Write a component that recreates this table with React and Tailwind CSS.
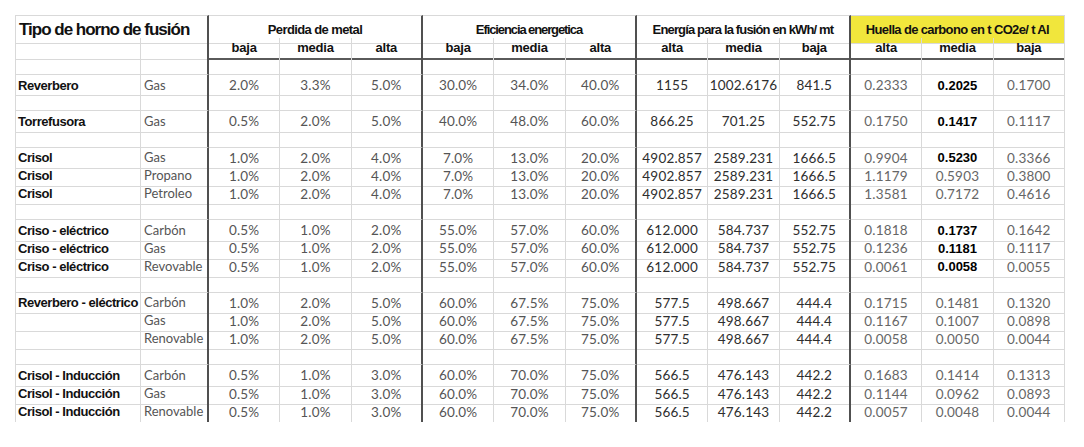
import React from "react";

const GRID = "grid grid-cols-[126px_68px_repeat(12,71.33px)]";

const groups = [
  { title: "Perdida de metal", track: "tracking-[-0.6px]", subs: ["baja", "media", "alta"], yellow: false },
  { title: "Eficiencia energetica", track: "tracking-[-1.1px]", subs: ["baja", "media", "alta"], yellow: false },
  { title: "Energía para la fusión en kWh/ mt", track: "tracking-[-0.85px]", subs: ["alta", "media", "baja"], yellow: false },
  { title: "Huella de carbono en t CO2e/ t Al", track: "tracking-[-0.65px]", subs: ["alta", "media", "baja"], yellow: true },
];

const rows = [
  null,
  ["Reverbero", "Gas", ["2.0%", "3.3%", "5.0%"], ["30.0%", "34.0%", "40.0%"], ["1155", "1002.6176", "841.5"], ["0.2333", "0.2025", "0.1700"], true],
  null,
  ["Torrefusora", "Gas", ["0.5%", "2.0%", "5.0%"], ["40.0%", "48.0%", "60.0%"], ["866.25", "701.25", "552.75"], ["0.1750", "0.1417", "0.1117"], true],
  null,
  ["Crisol", "Gas", ["1.0%", "2.0%", "4.0%"], ["7.0%", "13.0%", "20.0%"], ["4902.857", "2589.231", "1666.5"], ["0.9904", "0.5230", "0.3366"], true],
  ["Crisol", "Propano", ["1.0%", "2.0%", "4.0%"], ["7.0%", "13.0%", "20.0%"], ["4902.857", "2589.231", "1666.5"], ["1.1179", "0.5903", "0.3800"], false],
  ["Crisol", "Petroleo", ["1.0%", "2.0%", "4.0%"], ["7.0%", "13.0%", "20.0%"], ["4902.857", "2589.231", "1666.5"], ["1.3581", "0.7172", "0.4616"], false],
  null,
  ["Criso - eléctrico", "Carbón", ["0.5%", "1.0%", "2.0%"], ["55.0%", "57.0%", "60.0%"], ["612.000", "584.737", "552.75"], ["0.1818", "0.1737", "0.1642"], true],
  ["Criso - eléctrico", "Gas", ["0.5%", "1.0%", "2.0%"], ["55.0%", "57.0%", "60.0%"], ["612.000", "584.737", "552.75"], ["0.1236", "0.1181", "0.1117"], true],
  ["Criso - eléctrico", "Revovable", ["0.5%", "1.0%", "2.0%"], ["55.0%", "57.0%", "60.0%"], ["612.000", "584.737", "552.75"], ["0.0061", "0.0058", "0.0055"], true],
  null,
  ["Reverbero - eléctrico", "Carbón", ["1.0%", "2.0%", "5.0%"], ["60.0%", "67.5%", "75.0%"], ["577.5", "498.667", "444.4"], ["0.1715", "0.1481", "0.1320"], false],
  ["", "Gas", ["1.0%", "2.0%", "5.0%"], ["60.0%", "67.5%", "75.0%"], ["577.5", "498.667", "444.4"], ["0.1167", "0.1007", "0.0898"], false],
  ["", "Renovable", ["1.0%", "2.0%", "5.0%"], ["60.0%", "67.5%", "75.0%"], ["577.5", "498.667", "444.4"], ["0.0058", "0.0050", "0.0044"], false],
  null,
  ["Crisol - Inducción", "Carbón", ["0.5%", "1.0%", "3.0%"], ["60.0%", "70.0%", "75.0%"], ["566.5", "476.143", "442.2"], ["0.1683", "0.1414", "0.1313"], false],
  ["Crisol - Inducción", "Gas", ["0.5%", "1.0%", "3.0%"], ["60.0%", "70.0%", "75.0%"], ["566.5", "476.143", "442.2"], ["0.1144", "0.0962", "0.0893"], false],
  ["Crisol - Inducción", "Renovable", ["0.5%", "1.0%", "3.0%"], ["60.0%", "70.0%", "75.0%"], ["566.5", "476.143", "442.2"], ["0.0057", "0.0048", "0.0044"], false],
];

const groupColor = ["text-[#555555]", "text-[#555555]", "text-[#2e2e2e]", "text-[#666666]"];

function DataRow({ row, last }) {
  const bottom = last ? "" : "border-b border-b-[#d9d9d9]";
  const values = row ? [...row[2], ...row[3], ...row[4], ...row[5]] : Array(12).fill("");
  return (
    <div className={`${GRID} h-[18.15px]`}>
      <div className={`flex items-center pl-[2px] border-l border-l-[#d9d9d9] border-r border-r-[#d9d9d9] ${bottom} font-['Liberation_Sans',Arial,sans-serif] font-bold text-[13px] tracking-[-0.45px] text-[#111111] whitespace-nowrap`}>
        {row ? row[0] : ""}
      </div>
      <div className={`flex items-center pl-[3px] border-r-2 border-r-[#505050] ${bottom} font-['Lato',sans-serif] text-[13px] text-[#555555] whitespace-nowrap overflow-hidden`}>
        {row ? row[1] : ""}
      </div>
      {values.map((v, i) => {
        const g = Math.floor(i / 3);
        const thick = i % 3 === 2 && g < 3;
        const right = thick ? "border-r-2 border-r-[#505050]" : "border-r border-r-[#d9d9d9]";
        const bold = row && row[6] && i === 10;
        const font = bold
          ? "font-['Liberation_Sans',Arial,sans-serif] font-bold text-[13px] text-black"
          : `font-['Lato',sans-serif] text-[13.5px] tracking-[0.2px] ${groupColor[g]}`;
        return (
          <div key={i} className={`flex items-center justify-center ${right} ${bottom} whitespace-nowrap ${font}`}>
            {v}
          </div>
        );
      })}
    </div>
  );
}

export default function App() {
  return (
    <div className="w-[1084px] h-[447px] bg-white pt-[15px] pl-[15px] overflow-hidden">
      <div className="w-[1050px]">
        {/* Header row 1 */}
        <div className={`${GRID} h-[23px]`}>
          <div className="col-span-2 flex items-center pl-[3px] pt-[1px] border-t border-t-[#d9d9d9] border-l border-l-[#d9d9d9] border-b border-b-[#d9d9d9] border-r-2 border-r-[#505050] font-['Liberation_Sans',Arial,sans-serif] font-bold text-[17px] tracking-[-1px] text-[#111111] whitespace-nowrap">
            Tipo de horno de fusión
          </div>
          {groups.map((g, gi) => (
            <div
              key={gi}
              className={`col-span-3 flex items-center justify-center border-t border-t-[#d9d9d9] border-b border-b-[#d9d9d9] font-['Liberation_Sans',Arial,sans-serif] font-bold text-[13px] text-[#111111] whitespace-nowrap ${g.track} ${
                g.yellow ? "bg-[#f1e63c] border-r border-r-[#d9d9d9]" : "border-r-2 border-r-[#505050]"
              }`}
            >
              {g.title}
            </div>
          ))}
        </div>
        {/* Header row 2 */}
        <div className={`${GRID} h-[19px]`}>
          <div className="border-l border-l-[#d9d9d9] border-r border-r-[#d9d9d9] border-b border-b-[#d9d9d9]" />
          <div className="border-r-2 border-r-[#505050] border-b border-b-[#d9d9d9]" />
          {groups.flatMap((g, gi) =>
            g.subs.map((s, si) => (
              <div
                key={`${gi}-${si}`}
                className={`flex items-center justify-center border-b-2 border-b-[#5a5a5a] font-['Liberation_Sans',Arial,sans-serif] font-bold text-[13px] tracking-[-0.2px] text-[#111111] ${
                  si === 2 && gi < 3 ? "border-r-2 border-r-[#505050]" : "border-r border-r-[#d9d9d9]"
                }`}
              >
                {s}
              </div>
            ))
          )}
        </div>
        {rows.map((r, i) => (
          <DataRow key={i} row={r} last={i === rows.length - 1} />
        ))}
      </div>
    </div>
  );
}
